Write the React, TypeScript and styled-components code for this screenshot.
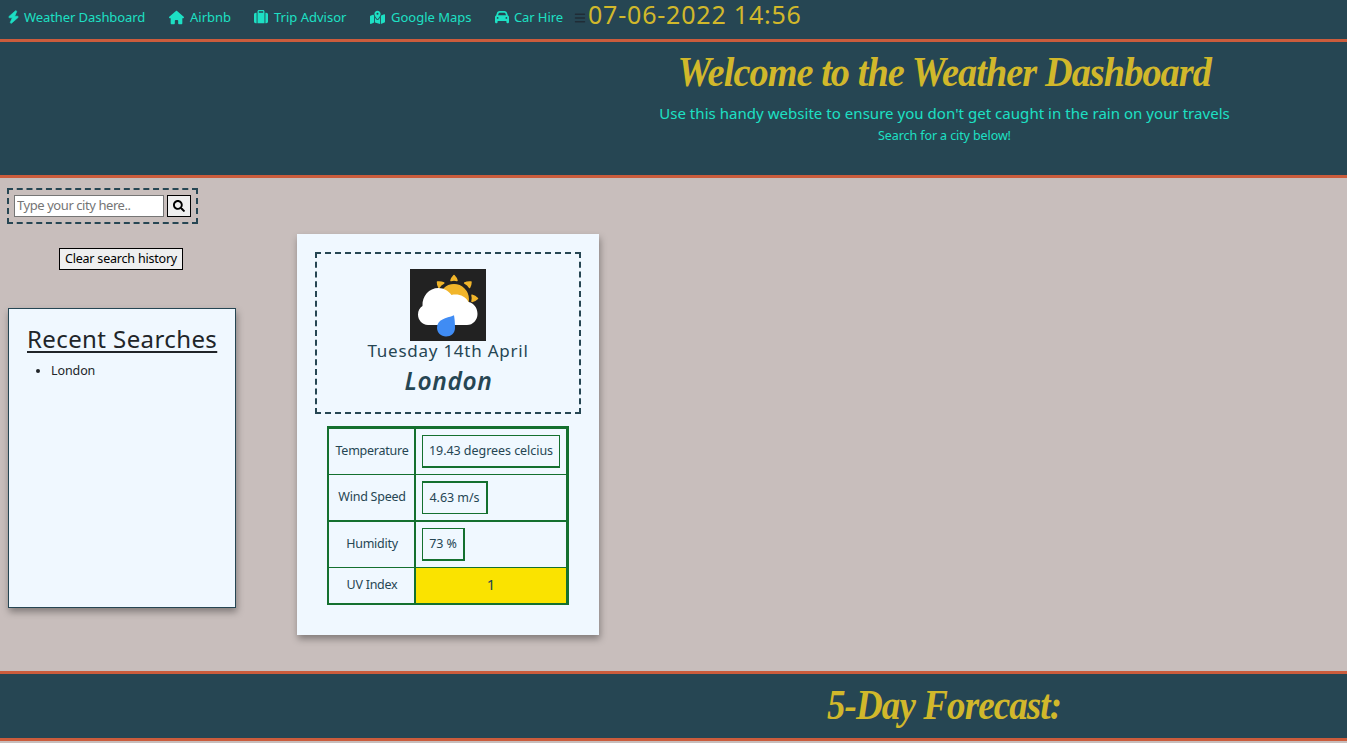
import React from "react";
import styled, { createGlobalStyle } from "styled-components";
import {
  FaBolt,
  FaHouse,
  FaSuitcase,
  FaMapLocationDot,
  FaCar,
  FaBars,
} from "react-icons/fa6";
import { FaSearch } from "react-icons/fa";

const navy = "#264653";
const teal = "#1de0c4";
const gold = "#d1b82b";
const rust = "#cb5c3c";
const ice = "#f0f8ff";
const green = "#14702f";

const GlobalStyle = createGlobalStyle`
  * { box-sizing: border-box; }
  html, body { margin: 0; }
  body {
    height: 743px;
    overflow: hidden;
    background: #c8bebc;
    color: #212529;
    font-family: "Noto Sans", sans-serif;
    font-size: 13px;
  }
  h1, h2, h3, p, ul { margin: 0; font-weight: 400; }
`;

const Nav = styled.nav`
  display: flex;
  height: 42px;
  padding-left: 8px;
  background: ${navy};
  border-bottom: 3px solid ${rust};
`;

const NavLink = styled.a<{ $width: number; $gap: number; $track?: number }>`
  display: flex;
  align-items: center;
  gap: ${(p) => p.$gap}px;
  width: ${(p) => p.$width}px;
  height: 34px;
  color: ${teal};
  letter-spacing: ${(p) => p.$track ?? 0}px;
  white-space: nowrap;
  svg { flex: none; }
`;

const BoltIcon = styled(FaBolt)`
  width: 11px;
  height: 14px;
  stroke: currentColor;
  stroke-width: 28px;
`;

const MenuIcon = styled.span`
  width: 14px;
  padding-top: 12px;
  color: #202c36;
  font-size: 12px;
  line-height: 12px;
`;

const Clock = styled.span`
  color: ${gold};
  font-size: 25px;
  line-height: 28px;
  letter-spacing: 0.8px;
  white-space: nowrap;
`;

const Banner = styled.header<{ $height: number; $top?: boolean }>`
  display: flex;
  flex-direction: column;
  align-items: center;
  height: ${(p) => p.$height}px;
  padding-left: 542px;
  background: ${navy};
  color: ${teal};
  border-bottom: 3px solid ${rust};
  border-top: ${(p) => (p.$top ? 3 : 0)}px solid ${rust};
`;

const Script = styled.h1<{ $squeeze: number; $line: number }>`
  color: ${gold};
  font: italic 700 42px "Liberation Serif", serif;
  line-height: ${(p) => p.$line}px;
  letter-spacing: -1px;
  white-space: nowrap;
  transform: scaleX(${(p) => p.$squeeze});
`;

const Lead = styled.p`
  padding-top: 1px;
  font-size: 15px;
  line-height: 21px;
  letter-spacing: 0.04px;
`;

const Hint = styled.p`
  font-size: 12.5px;
  line-height: 23px;
  letter-spacing: -0.1px;
`;

const Main = styled.main`
  display: flex;
  height: 493px;
`;

const Sidebar = styled.aside`
  display: flex;
  flex-direction: column;
  align-items: flex-start;
  width: 297px;
  padding: 10px 0 0 7px;
`;

const SearchForm = styled.form`
  display: flex;
  gap: 3px;
  width: 191px;
  height: 36px;
  padding: 5px;
  border: 2px dashed ${navy};
`;

const CityInput = styled.input`
  width: 150px;
  height: 22px;
  padding: 0 2px 2px;
  border: 1px solid #767676;
  border-radius: 0;
  background: #fff;
  font: 13px "Noto Sans", sans-serif;
  letter-spacing: -0.43px;
  &::placeholder { color: #757575; }
`;

const Button = styled.button<{ $width: number }>`
  display: flex;
  align-items: center;
  justify-content: center;
  width: ${(p) => p.$width}px;
  height: 22px;
  padding: 0 0 1px;
  border: 1px solid #000;
  background: #efefef;
  color: #000;
  font: 12.5px "Noto Sans", sans-serif;
  letter-spacing: -0.2px;
  white-space: nowrap;
`;

const ClearRow = styled.div`
  padding: 24px 0 38px 52px;
`;

const Recent = styled.section`
  width: 228px;
  height: 300px;
  margin-left: 1px;
  padding: 14px 18px;
  border: 1px solid ${navy};
  background: ${ice};
  box-shadow: 1px 4px 7px rgba(0, 0, 0, 0.35);
`;

const RecentTitle = styled.h2`
  font-size: 24px;
  line-height: 32px;
  letter-spacing: 0.4px;
  text-decoration: underline;
  text-underline-offset: 3px;
  text-decoration-thickness: 2px;
  white-space: nowrap;
`;

const CityList = styled.ul`
  padding: 6px 0 0 24px;
  font-size: 12.5px;
  line-height: 19px;
  letter-spacing: -0.1px;
`;

const WeatherCard = styled.section`
  display: flex;
  flex-direction: column;
  align-items: center;
  width: 302px;
  height: 401px;
  margin-top: 56px;
  padding-top: 18px;
  background: ${ice};
  color: ${navy};
  box-shadow: 1px 4px 7px rgba(0, 0, 0, 0.35);
`;

const Summary = styled.div`
  display: flex;
  flex-direction: column;
  align-items: center;
  width: 266px;
  height: 162px;
  padding-top: 15px;
  border: 2px dashed ${navy};
`;

const DateText = styled.p`
  font-size: 17px;
  line-height: 20px;
  letter-spacing: 0.75px;
`;

const City = styled.h3`
  margin-top: 3px;
  padding-left: 1px;
  font-size: 24.5px;
  font-style: italic;
  font-weight: 600;
  line-height: 34px;
  letter-spacing: 0.6px;
`;

const Table = styled.div`
  display: grid;
  grid-template-columns: 85px 152px;
  grid-template-rows: 46px 47px 46px 35px;
  width: 242px;
  height: 179px;
  margin-top: 12px;
  border: solid ${green};
  border-width: 3px 3px 2px 2px;
`;

const Label = styled.div<{ $rule: number }>`
  display: flex;
  align-items: center;
  justify-content: center;
  padding: 0 0 2px 1px;
  font-size: 12.5px;
  letter-spacing: -0.25px;
  border-bottom: ${(p) => p.$rule}px solid ${green};
`;

const Cell = styled.div<{ $rule: number }>`
  padding: 6px;
  border-left: 2px solid ${green};
  border-bottom: ${(p) => p.$rule}px solid ${green};
`;

const Value = styled.div<{ $width: number; $edges: string }>`
  display: flex;
  align-items: center;
  justify-content: center;
  width: ${(p) => p.$width}px;
  height: 33px;
  padding-bottom: 1px;
  border: solid ${green};
  border-width: ${(p) => p.$edges};
  font-size: 12.5px;
  letter-spacing: -0.05px;
  white-space: nowrap;
`;

const UvCell = styled.div`
  display: flex;
  align-items: center;
  justify-content: center;
  padding-bottom: 3px;
  border-left: 2px solid ${green};
  background: #fae300;
  font-size: 15px;
`;

const Drawing = styled.svg`
  flex: none;
`;

const links = [
  { icon: <BoltIcon />, text: "Weather Dashboard", width: 161, gap: 5, track: -0.08 },
  { icon: <FaHouse size={15} />, text: "Airbnb", width: 85, gap: 6 },
  { icon: <FaSuitcase size={14} />, text: "Trip Advisor", width: 116, gap: 6 },
  { icon: <FaMapLocationDot size={15} />, text: "Google Maps", width: 125, gap: 6 },
  { icon: <FaCar size={14} />, text: "Car Hire", width: 79, gap: 5, track: -0.1 },
];

const readings = [
  { label: "Temperature", value: "19.43 degrees celcius", width: 138, edges: "1px 1px 2px 1px", rule: 1 },
  { label: "Wind Speed", value: "4.63 m/s", width: 66, edges: "2px 2px 1px 1px", rule: 2 },
  { label: "Humidity", value: "73 %", width: 43, edges: "1px 2px 2px 1px", rule: 1 },
];

function ShowerIcon() {
  return (
    <Drawing width="76" height="72" viewBox="0 0 76 72">
      <rect width="76" height="72" fill="#222" />
      <g fill="#f1b52a" stroke="#f1b52a" strokeWidth="1.500" strokeLinejoin="round">
        <path d="M44 6.500c1.500 1.500 2.500 3 3 5q-3-1-6 0c.5-2 1.500-3.500 3-5z" />
        <path d="M61 13c0 2-.5 4-1.500 5.500q-1.500-3-4.800-4.500c2-1 4-1.300 6.300-1z" />
        <path d="M67.500 29.500c-1.500 1.500-3.500 2.700-5.500 3q1-3.200 0-6.300c2 .5 4 1.700 5.500 3.300z" />
        <path d="M27.500 13c2.300-.3 4.300 0 6.300 1q-3.300 1.500-4.800 4.500c-1-1.500-1.500-3.500-1.500-5.500z" />
        <circle cx="44" cy="30" r="14.200" />
      </g>
      <path
        d="M18 56C12 55.500 8 51 8 45.500c0-4 1.700-6.700 4.500-8.500C12 27 19 19 28.500 19c5.500 0 10 3 13 7 7-1.500 14 1 17 7C64 34 67.500 39 67.500 45c0 6-4.500 11-10.500 11z"
        fill="#fff"
      />
      <path
        d="M44 46.200c.6 3.300 1 8 1 12.800 0 5-4 8.500-9 8.500s-9-3.700-9-8.700C27 50 36 49.500 44 46.200z"
        fill="#408cf4"
      />
    </Drawing>
  );
}

export default function App() {
  return (
    <>
      <GlobalStyle />
      <Nav>
        {links.map((l) => (
          <NavLink key={l.text} $width={l.width} $gap={l.gap} $track={l.track}>
            {l.icon}
            {l.text}
          </NavLink>
        ))}
        <MenuIcon><FaBars /></MenuIcon>
        <Clock>07-06-2022 14:56</Clock>
      </Nav>
      <Banner $height={136}>
        <Script $squeeze={0.91} $line={60}>Welcome to the Weather Dashboard</Script>
        <Lead>Use this handy website to ensure you don't get caught in the rain on your travels</Lead>
        <Hint>Search for a city below!</Hint>
      </Banner>
      <Main>
        <Sidebar>
          <SearchForm>
            <CityInput placeholder="Type your city here.." />
            <Button type="button" $width={24} aria-label="Search"><FaSearch size={12} /></Button>
          </SearchForm>
          <ClearRow>
            <Button type="button" $width={124}>Clear search history</Button>
          </ClearRow>
          <Recent>
            <RecentTitle>Recent Searches</RecentTitle>
            <CityList><li>London</li></CityList>
          </Recent>
        </Sidebar>
        <WeatherCard>
          <Summary>
            <ShowerIcon />
            <DateText>Tuesday 14th April</DateText>
            <City>London</City>
          </Summary>
          <Table>
            {readings.map((r) => (
              <React.Fragment key={r.label}>
                <Label $rule={r.rule}>{r.label}</Label>
                <Cell $rule={r.rule}>
                  <Value $width={r.width} $edges={r.edges}>{r.value}</Value>
                </Cell>
              </React.Fragment>
            ))}
            <Label $rule={0}>UV Index</Label>
            <UvCell>1</UvCell>
          </Table>
        </WeatherCard>
      </Main>
      <Banner $height={70} $top>
        <Script as="h2" $squeeze={0.88} $line={62}>5-Day Forecast:</Script>
      </Banner>
    </>
  );
}
